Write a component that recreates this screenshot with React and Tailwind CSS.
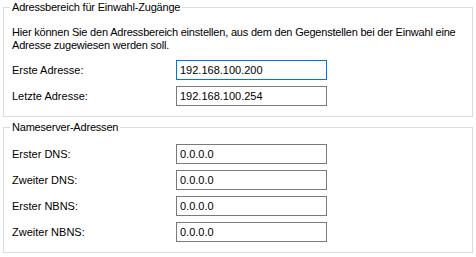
export default function App() {
  const font = { fontFamily: '"Liberation Sans", Arial, sans-serif' };
  const Row = ({ label, value, focused, first }) => (
    <div className={`flex items-center ${first ? "" : "mt-[6px]"}`}>
      <div className="w-[164px] leading-[13px]">{label}</div>
      <div
        className={`w-[151px] h-[20px] border flex items-center pl-[3px] leading-[13px] ${
          focused ? "border-[#0078d7]" : "border-[#7a7a7a]"
        }`}
      >
        {value}
      </div>
    </div>
  );
  return (
    <div
      className="w-[476px] h-[257px] bg-white text-black text-[11px] px-[3px] overflow-hidden"
      style={font}
    >
      <fieldset className="border border-[#dcdcdc] w-[470px] px-[8px] pb-[10px]">
        <legend className="ml-[-2px] px-[2px] leading-[15px] tracking-[-0.2px]">Adressbereich für Einwahl-Zugänge</legend>
        <p className="mt-[11px] leading-[13px] tracking-[-0.2px]">
          Hier können Sie den Adressbereich einstellen, aus dem den Gegenstellen bei der Einwahl eine Adresse
          zugewiesen werden soll.
        </p>
        <div className="mt-[8px]">
          <Row first label="Erste Adresse:" value="192.168.100.200" focused />
          <Row label="Letzte Adresse:" value="192.168.100.254" />
        </div>
      </fieldset>
      <fieldset className="border border-[#dcdcdc] w-[470px] px-[8px] pb-[10px] mt-[3px]">
        <legend className="ml-[-2px] px-[2px] leading-[15px] tracking-[-0.2px]">Nameserver-Adressen</legend>
        <div className="mt-[9px]">
          <Row first label="Erster DNS:" value="0.0.0.0" />
          <Row label="Zweiter DNS:" value="0.0.0.0" />
          <Row label="Erster NBNS:" value="0.0.0.0" />
          <Row label="Zweiter NBNS:" value="0.0.0.0" />
        </div>
      </fieldset>
    </div>
  );
}
